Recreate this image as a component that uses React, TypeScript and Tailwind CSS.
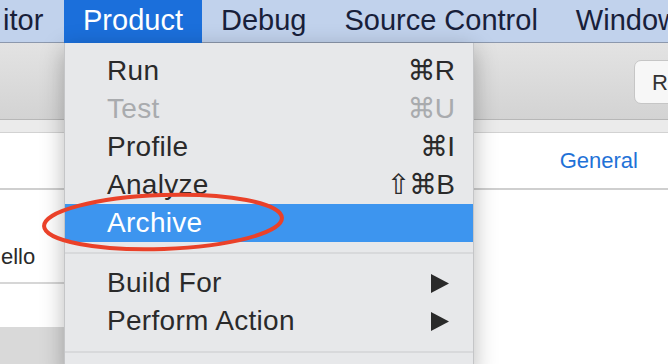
const font = "font-['Liberation_Sans','DejaVu_Sans',sans-serif]";

const menuBar = ["Debug", "Source Control", "Window"];

type Item = { label: string; keys?: string; disabled?: boolean; active?: boolean; sub?: boolean };

const groupOne: Item[] = [
  { label: "Run", keys: "⌘R" },
  { label: "Test", keys: "⌘U", disabled: true },
  { label: "Profile", keys: "⌘I" },
  { label: "Analyze", keys: "⇧⌘B" },
  { label: "Archive", active: true },
];

const groupTwo: Item[] = [
  { label: "Build For", sub: true },
  { label: "Perform Action", sub: true },
];

const MenuRow = ({ item }: { item: Item }) => (
  <div
    className={`flex h-[38px] items-center justify-between pl-[42px] pr-[19px] text-[28px] leading-none tracking-[0.3px] ${
      item.active ? "bg-[#3d95ef] text-white" : item.disabled ? "text-[#a9abae]" : "text-[#2a2a2a]"
    }`}
  >
    <span>{item.label}</span>
    {item.keys && <span className="tracking-[-1px]">{item.keys}</span>}
    {item.sub && (
      <svg width="19" height="19" viewBox="0 0 19 19" className="mr-[4px]">
        <polygon points="0,0 18,9.5 0,19" fill="#2a2a2a" />
      </svg>
    )}
  </div>
);

export default function App() {
  return (
    <div className={`relative h-[364px] w-[668px] overflow-hidden bg-white ${font}`}>
      {/* menu bar */}
      <div className="flex h-[43px] items-center whitespace-nowrap border-b border-[#8c98ad] bg-[#c1d2ec] text-[29px] text-[#18203a]">
        <div className="flex h-full w-[64px] shrink-0 items-center pl-[3px]">itor</div>
        <div className="flex h-[43px] shrink-0 items-center bg-[#1b6fdb] px-[19px] text-white">Product</div>
        {menuBar.map((m) => (
          <div key={m} className="flex h-full shrink-0 items-center px-[19px]">
            {m}
          </div>
        ))}
      </div>

      {/* toolbar */}
      <div className="flex h-[76px] items-start bg-gradient-to-b from-[#e3e3e3] to-[#d3d3d3] pl-[634px] pt-[17px]">
        <div className="flex h-[44px] w-[70px] shrink-0 items-center rounded-[7px] border border-[#c6c6c6] bg-[#f7f7f7] pl-[17px] text-[22px] text-[#333]">
          Run
        </div>
      </div>
      <div className="h-[14px] border-y border-t-[#b7b7b7] border-b-[#d2d2d2] bg-[#ebebeb]" />

      {/* content */}
      <div className="flex">
        <div className="flex w-[280px] flex-col">
          <div className="h-[57px] border-b-2 border-[#cfcfcf]" />
          <div className="flex h-[92px] items-end pb-[9px] text-[22px] text-[#2a2a2a]">
            <span className="pl-[1px]">ello</span>
          </div>
          <div className="h-[45px] border-t-2 border-[#d6d6d6]" />
          <div className="h-[40px] bg-[#d9d9d9]" />
        </div>
        <div className="flex flex-1 flex-col">
          <div className="flex h-[57px] items-center justify-end border-b-2 border-[#cfcfcf] pr-[30px] text-[22px] text-[#1f72d7]">
            General
          </div>
        </div>
      </div>

      {/* dropdown */}
      <div className="absolute left-[64px] top-[43px] h-[330px] w-[410px] border-x border-[#c4c5c7] bg-[#e7e8ea] pt-[9px] shadow-[0_6px_22px_rgba(0,0,0,0.28)]">
        {groupOne.map((i) => (
          <MenuRow key={i.label} item={i} />
        ))}
        <div className="my-[10px] h-[2px] bg-[#d8d9db]" />
        {groupTwo.map((i) => (
          <MenuRow key={i.label} item={i} />
        ))}
        <div className="my-[11px] h-[2px] bg-[#d8d9db]" />
      </div>

      {/* annotation */}
      <svg className="absolute left-0 top-0" width="668" height="364" viewBox="0 0 668 364">
        <ellipse
          cx="163"
          cy="222"
          rx="119"
          ry="27"
          fill="none"
          stroke="#ea4129"
          strokeWidth="4"
          transform="rotate(-2 163 222)"
        />
      </svg>
    </div>
  );
}
